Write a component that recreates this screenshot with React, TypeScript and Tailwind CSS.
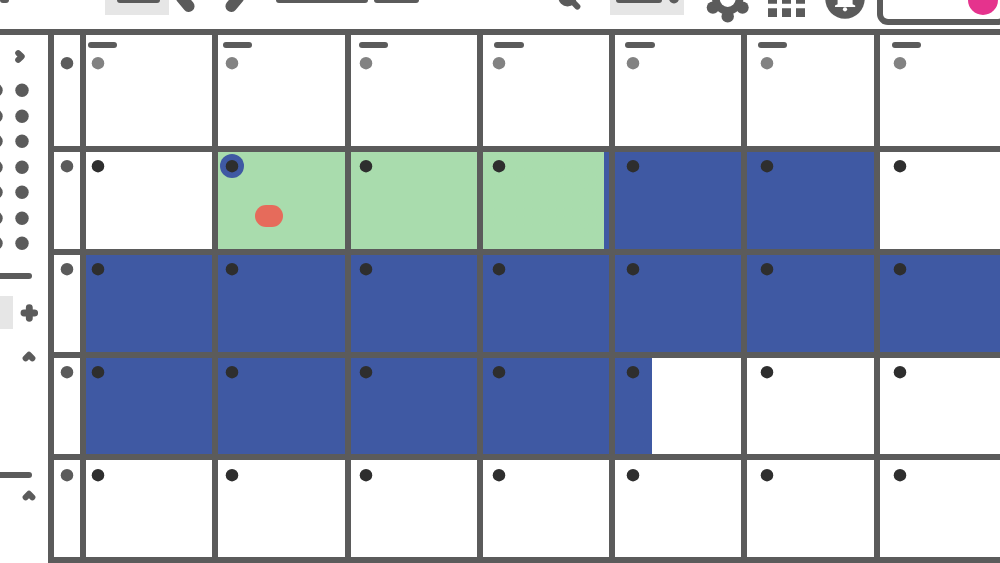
import clsx from "clsx";

// horizontal offsets of the label and the date inside each day column
const columns = [
  { label: "ml-[1.5px]", dot: "ml-[5.4px]" },
  { label: "ml-[4.7px]", dot: "ml-[7px]" },
  { label: "ml-[8px]", dot: "ml-[8.3px]" },
  { label: "ml-[11.4px]", dot: "ml-[9.7px]" },
  { label: "ml-[10px]", dot: "ml-[11px]" },
  { label: "ml-[10.6px]", dot: "ml-[12.3px]" },
  { label: "ml-[12px]", dot: "ml-[13.6px]" },
];

// g = green, b = blue, m = green then blue, h = blue then white, w = empty
const weeks = ["wwwwwww", "wggmbbw", "bbbbbbb", "bbbbhww", "wwwwwww"];

const fills: Record<string, string> = {
  w: "bg-white",
  g: "bg-[#a9dcad]",
  b: "bg-[#3f59a3]",
  m: "bg-linear-to-r from-[#a9dcad] from-[121.3px] to-[#3f59a3] to-[121.3px]",
  h: "bg-linear-to-r from-[#3f59a3] from-[37px] to-white to-[37px]",
};

const dates = ["", "", "", "", "", "", ""];

function Bar({ className }: { className?: string }) {
  return <div className={clsx("h-[3px] shrink-0 rounded-b-[3px] bg-[#5b5b5b]", className)} />;
}

function Dot({ className, r = 6.25 }: { className?: string; r?: number }) {
  return (
    <svg viewBox="0 0 14 14" className={clsx("size-3.5 shrink-0", className)} fill="currentColor">
      <circle cx="7" cy="7.2" r={r} />
    </svg>
  );
}

function Chevron({ className }: { className?: string }) {
  return (
    <svg
      viewBox="0 0 14 11"
      className={clsx("h-[11px] w-3.5 shrink-0", className)}
      fill="#5b5b5b"
      stroke="#5b5b5b"
      strokeWidth="6"
      strokeLinecap="round"
      strokeLinejoin="round"
    >
      <path d="M3.6 7.3 7 3.8l3.4 3.5" />
    </svg>
  );
}

function Header() {
  return (
    <header className="flex h-[35px] shrink-0 items-start overflow-hidden border-b-[6px] border-[#5b5b5b]">
      <Bar className="w-[8.5px]" />
      <div className="ml-[96.5px] h-[14.5px] w-16 shrink-0 bg-[#e6e6e6]">
        <Bar className="ml-3 w-[43px]" />
      </div>
      <svg
        viewBox="0 0 70 20"
        className="ml-[6px] h-5 w-[70px] shrink-0"
        fill="none"
        stroke="#5b5b5b"
        strokeWidth="11.5"
        strokeLinecap="round"
      >
        <path d="M6.5-2.5 13.8 6.2M63.5-2.5 56.2 6.2" />
      </svg>
      <Bar className="ml-[31px] w-[92px]" />
      <Bar className="ml-1.5 w-[45px]" />
      <svg viewBox="0 0 24 12" className="ml-[138px] h-3 w-6 shrink-0">
        <circle cx="10.5" cy="-2.6" r="9.1" fill="#5b5b5b" />
        <path d="M14 0 20.4 6.6" stroke="#5b5b5b" strokeWidth="6" strokeLinecap="round" />
      </svg>
      <div className="ml-[29px] flex h-[14.5px] w-[74px] shrink-0 bg-[#e6e6e6]">
        <Bar className="ml-1.5 w-[46px]" />
        <svg viewBox="0 0 10 6" className="ml-[7px] h-1.5 w-2.5">
          <circle cx="5" cy="-1.6" r="5" fill="#5b5b5b" />
        </svg>
      </div>
      <svg viewBox="0 0 44 24" className="ml-[22px] h-6 w-11 shrink-0" fill="#5b5b5b">
        <circle cx="21.7" cy="16.4" r="6.2" />
        <circle cx="6.9" cy="7.6" r="6.2" />
        <circle cx="36.5" cy="7.6" r="6.2" />
        <circle cx="21.7" cy="-1" r="15.6" />
        <circle cx="21.7" cy="-1" r="7.9" fill="#fff" />
      </svg>
      <svg viewBox="0 0 38 18" className="ml-[17.7px] h-[18px] w-[38px] shrink-0" fill="#5b5b5b">
        <path d="M0-5h9v8.7H0zM14-5h9v8.7h-9zM28-5h9v8.7h-9zM0 8.3h9v8.8H0zM14 8.3h9v8.8h-9zM28 8.3h9v8.8h-9z" />
      </svg>
      <svg viewBox="0 0 40 20" className="ml-[19.8px] h-5 w-10 shrink-0">
        <circle cx="20" cy="-1" r="19.7" fill="#5b5b5b" />
        <path d="M12.6-2h15v6.2l2.6 1.2v1.5H10V5.4l2.6-1.2z" fill="#fff" />
        <circle cx="20" cy="9.3" r="2.1" fill="#fff" />
      </svg>
      <div className="ml-[11.3px] flex h-[25px] w-[132px] shrink-0 justify-end rounded-b-[11px] border-6 border-t-0 border-[#5b5b5b]">
        <div className="mr-[5px] h-[14.5px] w-[30px] rounded-b-full bg-[#e5338d]" />
      </div>
    </header>
  );
}

function Sidebar() {
  return (
    <aside className="flex w-12 shrink-0 flex-col overflow-hidden">
      <Chevron className="mt-[16px] ml-[13px] rotate-90" />
      <div className="mt-[21px] flex flex-col gap-[11.5px] text-[#5b5b5b]">
        {dates.map((_, i) => (
          <div key={i} className="flex">
            <Dot r={6.7} className="-ml-[11px]" />
            <Dot r={6.7} className="ml-[11.6px]" />
          </div>
        ))}
      </div>
      <div className="mt-[23px] h-[6px] w-8 shrink-0 rounded-r-full bg-[#5b5b5b]" />
      <div className="mt-[17px] flex items-center">
        <div className="h-[33px] w-[13px] bg-[#e6e6e6]" />
        <svg
          viewBox="0 0 18 18"
          className="mt-px ml-[7.3px] size-[18px]"
          stroke="#5b5b5b"
          strokeWidth="6.9"
          strokeLinecap="round"
        >
          <path d="M9.3 3.7v10.6M4 9h10.6" />
        </svg>
      </div>
      <Chevron className="mt-[21.5px] ml-[22.3px]" />
      <div className="mt-[110px] h-[6px] w-8 shrink-0 rounded-r-full bg-[#5b5b5b]" />
      <Chevron className="mt-[12.5px] ml-[22.3px]" />
    </aside>
  );
}

function Day({ week, day }: { week: number; day: number }) {
  const { label, dot } = columns[day];
  const today = week === 1 && day === 1;

  return (
    <div className={clsx("overflow-hidden", fills[weeks[week][day]])}>
      {week === 0 && (
        <div className={clsx("mt-[7px] h-1.5 w-[29.5px] rounded-full bg-[#5b5b5b]", label)} />
      )}
      <Dot
        className={clsx(
          week === 0 ? "mt-2 text-[#828282]" : "mt-[7.4px] text-[#2e2e2e]",
          today && "rounded-full bg-[#3f59a3] ring-5 ring-[#3f59a3]",
          dot
        )}
      />
      {today && <div className="mt-[31.6px] ml-[36.5px] h-[22px] w-[28.5px] rounded-full bg-[#e66b5b]" />}
    </div>
  );
}

export default function App() {
  return (
    <div className="flex h-[563px] w-[1000px] flex-col overflow-hidden bg-white font-['Liberation_Sans',sans-serif]">
      <Header />
      <main className="flex min-h-0 flex-1">
        <Sidebar />
        <div className="grid shrink-0 grid-cols-[26px_repeat(7,126.28px)] grid-rows-[111px_repeat(4,96.8px)] gap-[6px] border-l-6 border-[#5b5b5b] bg-[#5b5b5b]">
          {weeks.map((_, week) => [
            <div key={week} className="overflow-hidden bg-white text-[#5b5b5b]">
              <Dot className={clsx("ml-1.5", week === 0 ? "mt-[21px]" : "mt-[7.4px]")} />
            </div>,
            ...columns.map((_, day) => <Day key={`${week}-${day}`} week={week} day={day} />),
          ])}
        </div>
      </main>
    </div>
  );
}
